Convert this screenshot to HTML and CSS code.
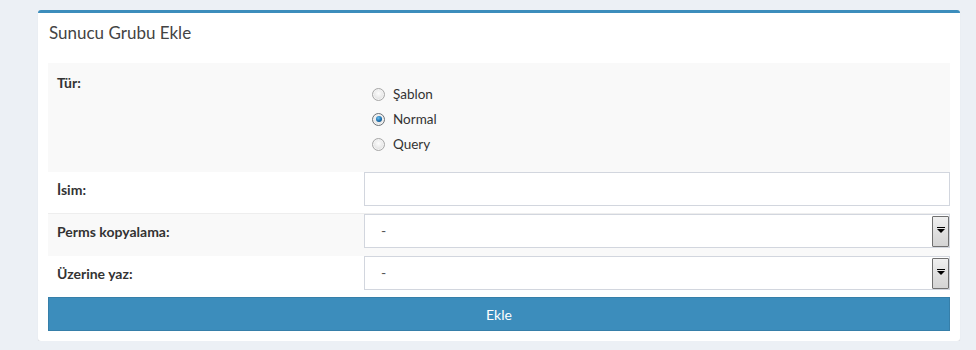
FILE: index.html
```html
<!DOCTYPE html>
<html lang="tr">
<head>
<meta charset="utf-8">
<title>Sunucu Grubu Ekle</title>
<link rel="stylesheet" href="styles.css">
</head>
<body>
<div class="box">
  <div class="box-header"><h3 class="box-title">Sunucu Grubu Ekle</h3></div>
  <div class="box-body">
    <table class="form-table">
      <tr class="row row-type">
        <td class="label label-type">Tür:</td>
        <td class="value">
          <div class="radio-list">
            <label class="radio-item"><span class="radio"></span>Şablon</label>
            <label class="radio-item"><span class="radio checked"></span>Normal</label>
            <label class="radio-item"><span class="radio"></span>Query</label>
          </div>
        </td>
      </tr>
      <tr class="row row-plain">
        <td class="label">İsim:</td>
        <td class="value"><div class="field"></div></td>
      </tr>
      <tr class="row row-shade row-border">
        <td class="label">Perms kopyalama:</td>
        <td class="value"><div class="field select">-<span class="arrow"><span class="tri"></span></span></div></td>
      </tr>
      <tr class="row row-plain">
        <td class="label">Üzerine yaz:</td>
        <td class="value"><div class="field select">-<span class="arrow"><span class="tri"></span></span></div></td>
      </tr>
    </table>
    <button class="submit" type="button">Ekle</button>
  </div>
</div>
</body>
</html>
```

FILE: styles.css
```css
html, body {
  margin: 0;
  padding: 0;
  background: #ecf0f5;
  font-family: Lato, "Open Sans", sans-serif;
  color: #333;
  font-size: 14px;
}
.box {
  margin: 10px 0 0 38px;
  width: 922px;
  background: #fff;
  border-top: 3px solid #3c8dbc;
  border-radius: 3px;
  box-shadow: 0 1px 1px rgba(0,0,0,0.1);
}
.box-header {
  height: 40px;
  padding: 0 11px;
  display: flex;
  align-items: center;
}
.box-title {
  margin: 0;
  font-size: 17px;
  font-weight: 400;
  color: #444;
  line-height: 20px;
}
.box-body {
  padding: 10px;
}
.form-table {
  width: 902px;
  border-collapse: collapse;
  border-spacing: 0;
}
.row td {
  padding: 0;
  vertical-align: top;
}
.row-type {
  background: #f9f9f9;
  height: 109px;
}
.row-shade { background: #f9f9f9; }
.row-border td { border-top: 1px solid #eee; }
.label {
  width: 316px;
  font-weight: 700;
  line-height: 20px;
  padding: 8px 0 0 9px !important;
  box-sizing: border-box;
}
.label-type {
  padding-top: 10px !important;
}
.radio-list {
  padding: 21px 0 0 8px;
  display: flex;
  flex-direction: column;
  gap: 5px;
}
.radio-item {
  display: flex;
  align-items: center;
  height: 20px;
  font-size: 13.5px;
}
.radio {
  width: 11px;
  height: 11px;
  border: 1px solid #a8a8a8;
  border-radius: 50%;
  background: radial-gradient(circle at 50% 40%, #fdfdfd 0%, #e6e6e6 60%, #d0d0d0 100%);
  margin-right: 8px;
  display: flex;
  align-items: center;
  justify-content: center;
  box-shadow: inset 0 0 0 1px #f4f4f4;
}
.radio.checked {
  border-color: #6d7378;
}
.radio.checked::after {
  content: "";
  width: 6px;
  height: 6px;
  border-radius: 50%;
  background: radial-gradient(circle at 40% 35%, #6cc0ef 0%, #1c6fae 55%, #0a3c63 100%);
}
.row-plain td.value { padding-bottom: 7px; }
.row-shade td.value { padding-bottom: 8px; }
.field {
  position: relative;
  height: 34px;
  box-sizing: border-box;
  border: 1px solid #d2d6de;
  background: #fff;
  line-height: 32px;
  padding-left: 16px;
  color: #555;
  font-size: 14px;
}
.arrow {
  position: absolute;
  right: 0;
  top: 1px;
  width: 17px;
  height: 31px;
  box-sizing: border-box;
  border: 1px solid #707070;
  border-radius: 1px;
  background: linear-gradient(#f0f0f0, #e0e0e0 50%, #d4d4d4);
  display: flex;
  justify-content: center;
  padding-top: 12px;
}
.tri {
  width: 0;
  height: 0;
  border-left: 4px solid transparent;
  border-right: 4px solid transparent;
  border-top: 4px solid #000;
  position: relative;
}
.tri::before {
  content: "";
  position: absolute;
  left: -4px;
  top: -6px;
  width: 8px;
  height: 1px;
  background: #000;
}
.submit {
  display: block;
  width: 902px;
  height: 34px;
  border: 1px solid #367fa9;
  background: #3c8dbc;
  color: #fff;
  font-family: inherit;
  font-size: 14px;
  padding: 0;
  cursor: pointer;
}
```
